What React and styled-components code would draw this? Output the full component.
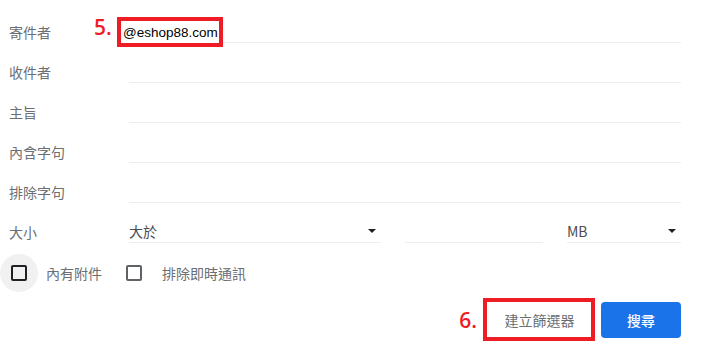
import React from 'react';
import styled, { createGlobalStyle } from 'styled-components';

const GlobalStyle = createGlobalStyle`
  body {
    margin: 0;
    background: #ffffff;
    font-family: Roboto, "Noto Sans CJK TC", sans-serif;
  }
`;

const Form = styled.div`
  width: 703px;
  height: 361px;
  box-sizing: border-box;
  padding: 3px 22px 0 0;
`;

const Row = styled.div`
  display: grid;
  grid-template-columns: 129px 1fr;
  height: 40px;
  align-items: end;
`;

const Label = styled.div`
  padding-left: 9px;
  padding-bottom: 1px;
  font-size: 14px;
  line-height: 20px;
  color: #6b6e72;
  font-family: "Noto Sans CJK TC", sans-serif;
`;

const Field = styled.div`
  position: relative;
  height: 24px;
  border-bottom: 1px solid #eeeeee;
  box-sizing: border-box;
  display: flex;
  align-items: center;
  font-size: 14px;
  color: #4a4d51;
  font-family: "Noto Sans CJK TC", sans-serif;
`;

const SizeFields = styled.div`
  display: grid;
  grid-template-columns: 252px 138px 1fr;
  column-gap: 24px;
`;

const Select = styled(Field)`
  justify-content: space-between;
  padding-right: 5px;
`;

const Caret = styled.span`
  width: 0;
  height: 0;
  border-left: 4px solid transparent;
  border-right: 4px solid transparent;
  border-top: 4px solid #202124;
`;

const Marker = styled.span`
  font-family: "Open Sans", "Liberation Sans", sans-serif;
  font-size: 21px;
  font-weight: 600;
  color: #ee1c25;
  line-height: 24px;
`;

const FieldMarker = styled(Marker)`
  position: absolute;
  left: -35px;
  top: -4px;
`;

const Highlight = styled.div`
  border: 4px solid #ee1c25;
  background: #ffffff;
  box-sizing: border-box;
`;

const ValueHighlight = styled(Highlight)`
  position: absolute;
  left: -12px;
  top: -2px;
  width: 106px;
  height: 30px;
  padding-left: 2px;
  display: flex;
  align-items: center;
  font-family: "Liberation Sans", Arial, sans-serif;
  font-size: 13.5px;
  color: #000000;
`;

const CheckRow = styled.div`
  display: flex;
  align-items: center;
  height: 40px;
  margin-top: 10px;
`;

const CheckItem = styled.label`
  display: flex;
  align-items: center;
  font-size: 14px;
  color: #6b6e72;
  font-family: "Noto Sans CJK TC", sans-serif;
  margin-right: ${p => p.$gap || 0}px;
`;

const CheckHit = styled.span`
  width: 38px;
  height: 38px;
  border-radius: 50%;
  background: ${p => (p.$hover ? '#f1f1f1' : 'transparent')};
  display: flex;
  align-items: center;
  justify-content: center;
  margin-right: ${p => p.$space}px;
  margin-left: ${p => p.$offset || 0}px;
`;

const Box = styled.span`
  width: 16px;
  height: 16px;
  box-sizing: border-box;
  border: 2px solid ${p => (p.$dark ? '#202124' : '#5f6368')};
  border-radius: 2px;
`;

const Actions = styled.div`
  display: flex;
  justify-content: flex-end;
  align-items: center;
  margin-top: 5px;
  gap: 6px;
`;

const FilterBox = styled(Highlight)`
  width: 112px;
  height: 43px;
  display: flex;
  align-items: center;
  justify-content: center;
`;

const GhostButton = styled.button`
  border: none;
  background: #ffffff;
  font-family: "Noto Sans CJK TC", sans-serif;
  font-size: 14px;
  color: #6b6e72;
  padding: 0 0 0 1px;
`;

const PrimaryButton = styled.button`
  width: 80px;
  height: 36px;
  border: none;
  border-radius: 4px;
  background: #1a73e8;
  color: #ffffff;
  font-family: "Noto Sans CJK TC", sans-serif;
  font-size: 14px;
  font-weight: 500;
`;

const textRows = ['收件者', '主旨', '內含字句', '排除字句'];

export default function App() {
  return (
    <>
      <GlobalStyle />
      <Form>
        <Row>
          <Label>寄件者</Label>
          <Field>
            <FieldMarker>5.</FieldMarker>
            <ValueHighlight>@eshop88.com</ValueHighlight>
          </Field>
        </Row>
        {textRows.map(label => (
          <Row key={label}>
            <Label>{label}</Label>
            <Field />
          </Row>
        ))}
        <Row>
          <Label>大小</Label>
          <SizeFields>
            <Select>
              大於
              <Caret />
            </Select>
            <Field />
            <Select>
              MB
              <Caret />
            </Select>
          </SizeFields>
        </Row>
        <CheckRow>
          <CheckItem $gap={24}>
            <CheckHit $hover $space={8}>
              <Box $dark />
            </CheckHit>
            內有附件
          </CheckItem>
          <CheckItem>
            <CheckHit $space={9} $offset={-11}>
              <Box />
            </CheckHit>
            排除即時通訊
          </CheckItem>
        </CheckRow>
        <Actions>
          <Marker>6.</Marker>
          <FilterBox>
            <GhostButton>建立篩選器</GhostButton>
          </FilterBox>
          <PrimaryButton>搜尋</PrimaryButton>
        </Actions>
      </Form>
    </>
  );
}
